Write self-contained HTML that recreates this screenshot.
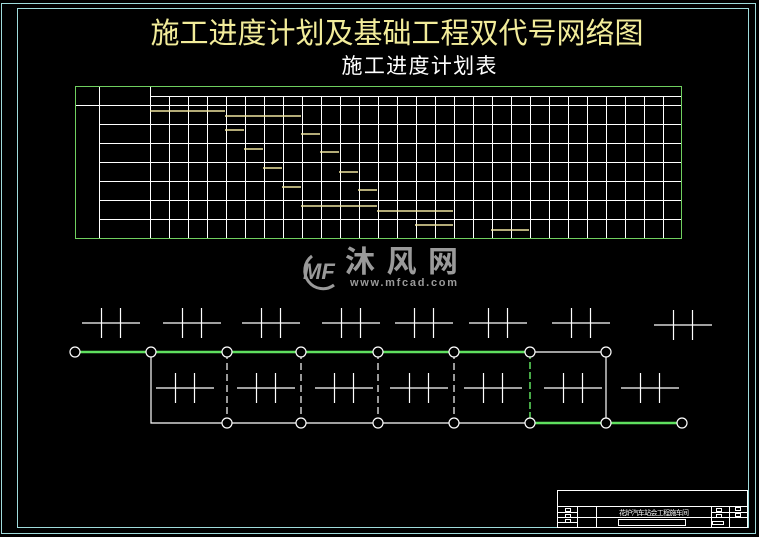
<!DOCTYPE html>
<html><head><meta charset="utf-8"><style>
html,body{margin:0;padding:0;background:#000;}
svg{display:block}
</style></head><body>
<svg width="759" height="537" viewBox="0 0 759 537" xmlns="http://www.w3.org/2000/svg">
<rect width="759" height="537" fill="#000"/>
<!-- frames -->
<rect x="1.5" y="3.5" width="754" height="530" fill="none" stroke="#9fdcdc" stroke-width="1"/>
<rect x="17.5" y="8.5" width="731" height="519" fill="none" stroke="#9fdcdc" stroke-width="1"/>
<!-- titles -->
<text x="397" y="43" text-anchor="middle" font-family="'Liberation Sans','Noto Sans CJK SC',sans-serif" font-size="29" fill="#f2ec9a" textLength="493">施工进度计划及基础工程双代号网络图</text>
<text x="419" y="73" text-anchor="middle" font-family="'Liberation Sans','Noto Sans CJK SC',sans-serif" font-size="21" fill="#fff" textLength="155">施工进度计划表</text>
<!-- table -->
<g stroke="#fff" stroke-width="1" fill="none">
<path d="M75 105.5H681 M150 96.5H681 M99.5 86V238 M150.5 86V238 M99 124.5H681 M99 143.5H681 M99 162.5H681 M99 181.5H681 M99 200.5H681 M99 219.5H681"/>
<path d="M169.5 96V238M188.5 96V238M207.5 96V238M226.5 96V238M245.5 96V238M264.5 96V238M283.5 96V238M302.5 96V238M321.5 96V238M340.5 96V238M359.5 96V238M378.5 96V238M397.5 96V238M416.5 96V238M435.5 96V238M454.5 96V238M473.5 96V238M492.5 96V238M511.5 96V238M530.5 96V238M549.5 96V238M568.5 96V238M587.5 96V238M606.5 96V238M625.5 96V238M644.5 96V238M663.5 96V238"/>
</g>
<rect x="75.5" y="86.5" width="606" height="152" fill="none" stroke="#6fcf5f" stroke-width="1"/>
<g stroke="#f0e6a0" stroke-width="1.5">
<path d="M150 111H225M225 116H301M225 130H244M301 134H320M244 149H263M320 152H339M263 168H282M339 172H358M282 187H301M358 190H377M301 206H377M377 211H453M415 225H453M491 230H529"/>
</g>
<!-- watermark -->
<g fill="#9a9a9a" font-family="'Liberation Sans','Noto Sans CJK SC',sans-serif">
<path d="M312 256 A16 16 0 1 0 334 285" fill="none" stroke="#9a9a9a" stroke-width="3"/>
<text x="303" y="279" font-size="22" font-weight="bold" font-style="italic">MF</text>
<text x="345" y="272" font-size="30" font-weight="bold" textLength="113">沐风网</text>
<text x="350" y="286" font-size="11" font-weight="bold" textLength="107">www.mfcad.com</text>
</g>
<!-- network -->
<g stroke="#fff" stroke-width="1.2" fill="none">
<path d="M151 352V423H227 M227 423H530 M530 352H606 M606 352V423"/>
<path d="M227 352V423M301 352V423M378 352V423M454 352V423" stroke-dasharray="7,4"/>
</g>
<g stroke="#5fe05f" stroke-width="2.5" fill="none">
<path d="M75 352H530 M530 423H682"/>
<path d="M530 352V423" stroke-width="1.5" stroke-dasharray="7,3"/>
</g>
<g stroke="#fff" stroke-width="1.2" fill="#000">
<circle cx="75" cy="352" r="5"/><circle cx="151" cy="352" r="5"/><circle cx="227" cy="352" r="5"/><circle cx="301" cy="352" r="5"/><circle cx="378" cy="352" r="5"/><circle cx="454" cy="352" r="5"/><circle cx="530" cy="352" r="5"/><circle cx="606" cy="352" r="5"/>
<circle cx="227" cy="423" r="5"/><circle cx="301" cy="423" r="5"/><circle cx="378" cy="423" r="5"/><circle cx="454" cy="423" r="5"/><circle cx="530" cy="423" r="5"/><circle cx="606" cy="423" r="5"/><circle cx="682" cy="423" r="5"/>
</g>
<g stroke="#fff" stroke-width="1.2">
<path d="M82 323H140M101.5 308V338M120.5 308V338"/>
<path d="M163 323H221M182.5 308V338M201.5 308V338"/>
<path d="M242 323H300M261.5 308V338M280.5 308V338"/>
<path d="M322 323H380M341.5 308V338M360.5 308V338"/>
<path d="M395 323H453M414.5 308V338M433.5 308V338"/>
<path d="M469 323H527M488.5 308V338M507.5 308V338"/>
<path d="M552 323H610M571.5 308V338M590.5 308V338"/>
<path d="M654 325H712M673.5 310V340M692.5 310V340"/>
<path d="M156 388H214M175.5 373V403M194.5 373V403"/>
<path d="M237 388H295M256.5 373V403M275.5 373V403"/>
<path d="M315 388H373M334.5 373V403M353.5 373V403"/>
<path d="M390 388H448M409.5 373V403M428.5 373V403"/>
<path d="M464 388H522M483.5 373V403M502.5 373V403"/>
<path d="M544 388H602M563.5 373V403M582.5 373V403"/>
<path d="M621 388H679M640.5 373V403M659.5 373V403"/>
</g>
<!-- title block -->
<g stroke="#fff" stroke-width="1" fill="none">
<rect x="557.5" y="490.5" width="190" height="37"/>
<path d="M557 506.5H748 M557 512.5H577 M557 517.5H748 M557 522.5H577 M577.5 506V527 M596.5 506V527 M711.5 506V527 M729.5 506V527 M711 512.5H748"/>
<rect x="618.5" y="519.5" width="67" height="6"/>
<rect x="565.5" y="508.5" width="5" height="3"/><rect x="565.5" y="514.5" width="5" height="3"/><rect x="565.5" y="519.5" width="5" height="3"/>
<rect x="716.5" y="508.5" width="5" height="3"/><rect x="735.5" y="507.5" width="5" height="3"/><rect x="716.5" y="514.5" width="5" height="3"/><rect x="735.5" y="513.5" width="5" height="3"/><rect x="712.5" y="521.5" width="11" height="3"/>
</g>
<text x="654" y="515" text-anchor="middle" font-family="'Liberation Sans','Noto Sans CJK SC',sans-serif" font-size="7" fill="#fff" textLength="70">花炉汽车站会工程施车间</text>
</svg>
</body></html>
